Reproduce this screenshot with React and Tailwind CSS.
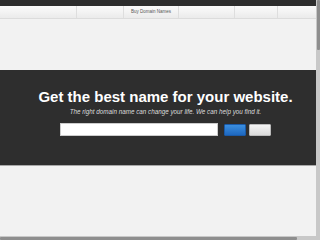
export default function App() {
  return (
    <div className="w-[320px] h-[240px] overflow-hidden flex bg-[#f2f2f2]" style={{ fontFamily: '"Liberation Sans", Arial, sans-serif' }}>
      <div className="w-[316px] h-[240px] flex flex-col">
        <div className="flex-1 flex flex-col overflow-hidden">
          <div className="h-[6px] bg-[#2e2e2e] shrink-0" />
          <div className="h-[13px] shrink-0 flex bg-gradient-to-b from-[#fbfbfb] to-[#ebebeb] border-b border-[#dcdcdc]">
            <div className="w-[77px] border-r border-[#dedede]" />
            <div className="w-[47px] border-r border-[#dedede]" />
            <div className="w-[55px] border-r border-[#dedede] flex items-center justify-center text-[4.5px] text-[#555] whitespace-nowrap">Buy Domain Names</div>
            <div className="w-[56px] border-r border-[#dedede]" />
            <div className="w-[43px] border-r border-[#dedede]" />
            <div className="flex-1" />
          </div>
          <div className="h-[51px] shrink-0" />
          <div className="h-[96px] shrink-0 bg-[#2e2e2e] border-b border-[#a8a8a8] flex flex-col items-center pl-[15px]">
            <div className="mt-[18px] text-white font-bold text-[15px] leading-[18px] whitespace-nowrap">Get the best name for your website.</div>
            <div className="mt-[2px] text-[#dcdcdc] italic text-[6.3px] leading-[8px] whitespace-nowrap">The right domain name can change your life. We can help you find it.</div>
            <div className="mt-[7px] flex items-center gap-[3px]">
              <div className="w-[158px] h-[13px] bg-white border border-[#ccc] mr-[3px]" />
              <div className="w-[22px] h-[12px] rounded-[1px] bg-gradient-to-b from-[#3b8fe0] to-[#1e68c0] border border-[#1a5aa8]" />
              <div className="w-[22px] h-[12px] rounded-[1px] bg-gradient-to-b from-[#f4f4f4] to-[#dadada] border border-[#bbb]" />
            </div>
          </div>
          <div className="flex-1" />
        </div>
        <div className="h-[4px] shrink-0 bg-[#c8c8c8] flex">
          <div className="w-[297px] h-[3px] mt-[1px] bg-[#8e8e8e] rounded-[1px]" />
        </div>
      </div>
      <div className="w-[4px] h-[240px] bg-[#c8c8c8] flex flex-col">
        <div className="h-[50px] w-[3px] ml-[1px] bg-[#8e8e8e] rounded-[1px]" />
      </div>
    </div>
  );
}
